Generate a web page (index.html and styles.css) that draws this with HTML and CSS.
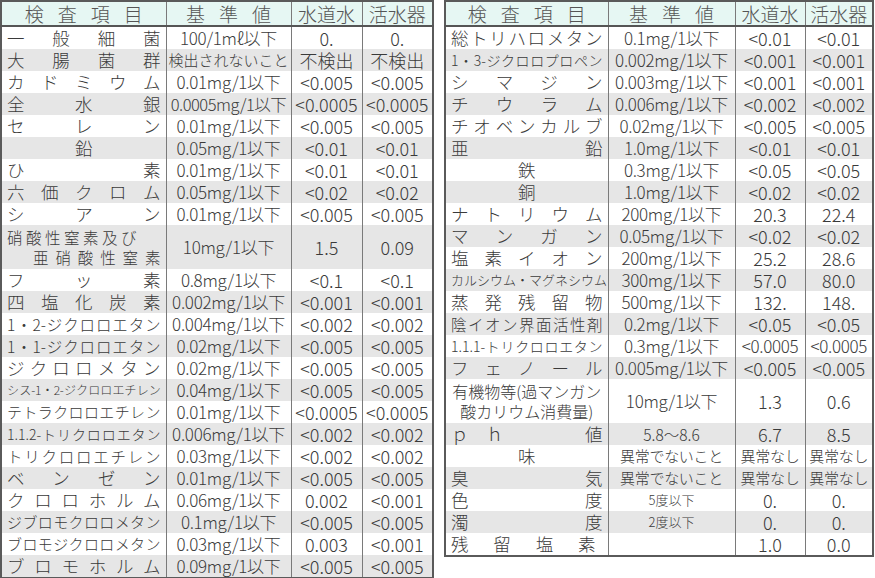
FILE: index.html
```html
<!DOCTYPE html>
<html lang="ja">
<head>
<meta charset="utf-8">
<title>水質検査</title>
<link rel="stylesheet" href="styles.css">
</head>
<body>
<div class="page">
  <table class="tbl tbl-left">
    <colgroup><col class="c1"><col class="c2"><col class="c3"><col class="c4"></colgroup>
    <thead>
      <tr><th><span class="sp">検査項目</span></th><th><span class="sp">基準値</span></th><th>水道水</th><th>活水器</th></tr>
    </thead>
    <tbody>
      <tr><td class="nm">一般細菌</td><td>100/1mℓ以下</td><td>0.</td><td>0.</td></tr>
      <tr><td class="nm">大腸菌群</td><td class="sm">検出されないこと</td><td>不検出</td><td>不検出</td></tr>
      <tr><td class="nm">カドミウム</td><td>0.01mg/1以下</td><td>&lt;0.005</td><td>&lt;0.005</td></tr>
      <tr><td class="nm">全水銀</td><td class="tight">0.0005mg/1以下</td><td>&lt;0.0005</td><td>&lt;0.0005</td></tr>
      <tr><td class="nm">セレン</td><td>0.01mg/1以下</td><td>&lt;0.005</td><td>&lt;0.005</td></tr>
      <tr><td class="nm ctr">鉛</td><td>0.05mg/1以下</td><td>&lt;0.01</td><td>&lt;0.01</td></tr>
      <tr><td class="nm">ひ素</td><td>0.01mg/1以下</td><td>&lt;0.01</td><td>&lt;0.01</td></tr>
      <tr><td class="nm">六価クロム</td><td>0.05mg/1以下</td><td>&lt;0.02</td><td>&lt;0.02</td></tr>
      <tr><td class="nm">シアン</td><td>0.01mg/1以下</td><td>&lt;0.005</td><td>&lt;0.005</td></tr>
      <tr class="dbl"><td class="nm two"><div class="l1">硝酸性窒素及び</div><div class="l2">亜硝酸性窒素</div></td><td>10mg/1以下</td><td>1.5</td><td>0.09</td></tr>
      <tr><td class="nm">フッ素</td><td>0.8mg/1以下</td><td>&lt;0.1</td><td>&lt;0.1</td></tr>
      <tr><td class="nm">四塩化炭素</td><td>0.002mg/1以下</td><td>&lt;0.001</td><td>&lt;0.001</td></tr>
      <tr><td class="nm s16">1・2-ジクロロエタン</td><td>0.004mg/1以下</td><td>&lt;0.002</td><td>&lt;0.002</td></tr>
      <tr><td class="nm s16">1・1-ジクロロエタン</td><td>0.02mg/1以下</td><td>&lt;0.005</td><td>&lt;0.005</td></tr>
      <tr><td class="nm">ジクロロメタン</td><td>0.02mg/1以下</td><td>&lt;0.005</td><td>&lt;0.005</td></tr>
      <tr><td class="nm s12">シス-1・2-ジクロロエチレン</td><td>0.04mg/1以下</td><td>&lt;0.005</td><td>&lt;0.005</td></tr>
      <tr><td class="nm s15">テトラクロロエチレン</td><td>0.01mg/1以下</td><td>&lt;0.0005</td><td>&lt;0.0005</td></tr>
      <tr><td class="nm s14">1.1.2-トリクロロエタン</td><td>0.006mg/1以下</td><td>&lt;0.002</td><td>&lt;0.002</td></tr>
      <tr><td class="nm s16">トリクロロエチレン</td><td>0.03mg/1以下</td><td>&lt;0.002</td><td>&lt;0.002</td></tr>
      <tr><td class="nm">ベンゼン</td><td>0.01mg/1以下</td><td>&lt;0.005</td><td>&lt;0.005</td></tr>
      <tr><td class="nm">クロロホルム</td><td>0.06mg/1以下</td><td>0.002</td><td>&lt;0.001</td></tr>
      <tr><td class="nm s15">ジブロモクロロメタン</td><td>0.1mg/1以下</td><td>&lt;0.005</td><td>&lt;0.005</td></tr>
      <tr><td class="nm s15">ブロモジクロロメタン</td><td>0.03mg/1以下</td><td>0.003</td><td>&lt;0.001</td></tr>
      <tr><td class="nm">ブロモホルム</td><td>0.09mg/1以下</td><td>&lt;0.005</td><td>&lt;0.005</td></tr>
    </tbody>
  </table>

  <table class="tbl tbl-right">
    <colgroup><col class="d1"><col class="d2"><col class="d3"><col class="d4"></colgroup>
    <thead>
      <tr><th><span class="sp">検査項目</span></th><th><span class="sp">基準値</span></th><th>水道水</th><th>活水器</th></tr>
    </thead>
    <tbody>
      <tr><td class="nm">総トリハロメタン</td><td>0.1mg/1以下</td><td>&lt;0.01</td><td>&lt;0.01</td></tr>
      <tr><td class="nm s14">1・3-ジクロロプロペン</td><td>0.002mg/1以下</td><td>&lt;0.001</td><td>&lt;0.001</td></tr>
      <tr><td class="nm">シマジン</td><td>0.003mg/1以下</td><td>&lt;0.001</td><td>&lt;0.001</td></tr>
      <tr><td class="nm">チウラム</td><td>0.006mg/1以下</td><td>&lt;0.002</td><td>&lt;0.002</td></tr>
      <tr><td class="nm">チオベンカルブ</td><td>0.02mg/1以下</td><td>&lt;0.005</td><td>&lt;0.005</td></tr>
      <tr><td class="nm">亜鉛</td><td>1.0mg/1以下</td><td>&lt;0.01</td><td>&lt;0.01</td></tr>
      <tr><td class="nm ctr">鉄</td><td>0.3mg/1以下</td><td>&lt;0.05</td><td>&lt;0.05</td></tr>
      <tr><td class="nm ctr">銅</td><td>1.0mg/1以下</td><td>&lt;0.02</td><td>&lt;0.02</td></tr>
      <tr><td class="nm">ナトリウム</td><td>200mg/1以下</td><td>20.3</td><td>22.4</td></tr>
      <tr><td class="nm">マンガン</td><td>0.05mg/1以下</td><td>&lt;0.02</td><td>&lt;0.02</td></tr>
      <tr><td class="nm">塩素イオン</td><td>200mg/1以下</td><td>25.2</td><td>28.6</td></tr>
      <tr><td class="nm s13">カルシウム・マグネシウム</td><td>300mg/1以下</td><td>57.0</td><td>80.0</td></tr>
      <tr><td class="nm">蒸発残留物</td><td>500mg/1以下</td><td>132.</td><td>148.</td></tr>
      <tr><td class="nm s16">陰イオン界面活性剤</td><td>0.2mg/1以下</td><td>&lt;0.05</td><td>&lt;0.05</td></tr>
      <tr><td class="nm s14">1.1.1-トリクロロエタン</td><td>0.3mg/1以下</td><td class="nt">&lt;0.0005</td><td class="nt">&lt;0.0005</td></tr>
      <tr><td class="nm">フェノール</td><td>0.005mg/1以下</td><td>&lt;0.005</td><td>&lt;0.005</td></tr>
      <tr class="dbl"><td class="nm two ctr2"><div>有機物等(過マンガン</div><div>酸カリウム消費量)</div></td><td>10mg/1以下</td><td>1.3</td><td>0.6</td></tr>
      <tr><td class="nm plain"><div class="split"><span>ｐ　ｈ</span><span>値</span></div></td><td class="mid">5.8～8.6</td><td>6.7</td><td>8.5</td></tr>
      <tr><td class="nm ctr">味</td><td class="xs">異常でないこと</td><td class="xs">異常なし</td><td class="xs">異常なし</td></tr>
      <tr><td class="nm">臭気</td><td class="xs">異常でないこと</td><td class="xs">異常なし</td><td class="xs">異常なし</td></tr>
      <tr><td class="nm">色度</td><td class="xxs">5度以下</td><td>0.</td><td>0.</td></tr>
      <tr><td class="nm">濁度</td><td class="xxs">2度以下</td><td>0.</td><td>0.</td></tr>
      <tr><td class="nm pr">残留塩素</td><td></td><td>1.0</td><td>0.0</td></tr>
    </tbody>
  </table>
</div>
</body>
</html>
```

FILE: styles.css
```css
html, body {
  margin: 0;
  padding: 0;
  background: #ffffff;
}

.page {
  display: flex;
  align-items: flex-start;
  gap: 10px;
  font-family: "Noto Sans CJK JP", "Noto Sans", sans-serif;
  font-weight: 300;
  color: #3a3a3a;
}

.tbl {
  border-collapse: collapse;
  table-layout: fixed;
  border: 2px solid #5a5a5a;
}

.tbl-left { width: 434px; }
.tbl-right { width: 430px; }

.c1 { width: 165px; }
.c2 { width: 125px; }
.c3 { width: 71px; }
.c4 { width: 71px; }

.d1 { width: 163px; }
.d2 { width: 127px; }
.d3 { width: 70px; }
.d4 { width: 68px; }

.tbl th {
  height: 23px;
  padding: 0;
  background: #e6f7f3;
  color: #555;
  font-weight: 300;
  font-size: 19px;
  line-height: 23px;
  text-align: center;
  border-left: 1px solid #7a7a7a;
  border-bottom: 2px solid #555;
  white-space: nowrap;
}

.sp {
  letter-spacing: 14px;
  padding-left: 14px;
}

.tbl td {
  height: 22px;
  padding: 0;
  font-size: 18px;
  line-height: 22px;
  text-align: center;
  vertical-align: middle;
  white-space: nowrap;
  border-left: 1px solid #7a7a7a;
}

.tbl td:nth-child(2) {
  font-size: 17px;
  letter-spacing: -0.3px;
}

.tbl td.tight {
  font-size: 16.5px;
  letter-spacing: -0.5px;
}

.tbl td.nt {
  font-size: 17px;
  letter-spacing: -0.3px;
}

.tbl tbody tr:nth-child(even) td {
  background: #e6e6e6;
}

.tbl tr.dbl td {
  height: 44px;
}

.tbl td.nm {
  padding: 0 5px;
  font-size: 17.5px;
  letter-spacing: 0;
  text-align: justify;
  text-align-last: justify;
  text-justify: inter-character;
}

.tbl td.nm.ctr {
  text-align: center;
  text-align-last: center;
}

.tbl td.s16 { font-size: 15.5px; }
.tbl td.s15 { font-size: 15px; }
.tbl td.s14 { font-size: 14px; }
.tbl td.s13 { font-size: 13px; }
.tbl td.s12 { font-size: 12px; letter-spacing: -0.3px; }

.tbl td.sm { font-size: 15px; letter-spacing: 0; }
.tbl td.mid { font-size: 15.5px; letter-spacing: 0; }
.tbl td.xs { font-size: 15px; letter-spacing: -0.3px; }
.tbl td.xxs { font-size: 13px; letter-spacing: 0; }

.tbl td.two {
  font-size: 15.5px;
  line-height: 20px;
}

.two .l1 {
  padding-right: 24px;
}

.two .l2 {
  padding-left: 26px;
}

.tbl td.ctr2 {
  text-align: center;
  text-align-last: center;
  font-size: 16px;
}

.tbl td.plain {
  text-align: left;
  text-align-last: auto;
}

.split {
  display: flex;
  justify-content: space-between;
  align-items: center;
}

.tbl td.pr {
  padding-right: 12px;
}
```
